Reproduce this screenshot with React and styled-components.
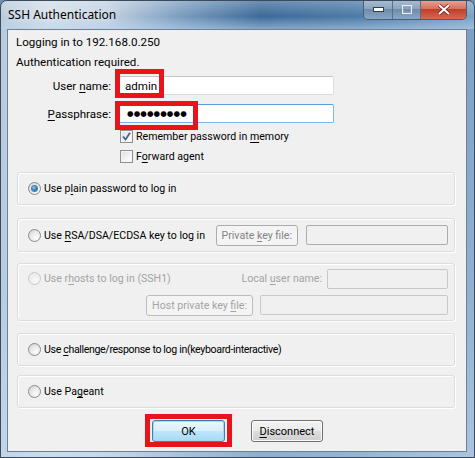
import React from "react";
import styled, { createGlobalStyle, css } from "styled-components";

const GlobalStyle = createGlobalStyle`
  body {
    margin: 0;
    background: #6f8fae;
    font-family: Roboto, "Noto Sans", sans-serif;
    font-size: 10.6px;
    color: #000;
  }
`;

const Window = styled.div`
  box-sizing: border-box;
  width: 475px;
  height: 458px;
  display: flex;
  flex-direction: column;
  border: 1px solid #3a4b5e;
  border-radius: 7px 7px 0 0;
  overflow: hidden;
  background:
    linear-gradient(90deg, #b9cadb 0%, #d3dee9 10%, #c2d2e2 22%, #7296bb 40%, #3d6a99 55%, #4c7aa8 75%, #7ea2c6 100%);
`;

const TitleBar = styled.div`
  height: 28px;
  display: flex;
  justify-content: space-between;
  align-items: flex-start;
  background: linear-gradient(180deg, rgba(255,255,255,0.25) 0%, rgba(255,255,255,0) 55%, rgba(190,215,240,0.55) 100%);
`;

const TitleText = styled.div`
  padding: 5px 0 0 7px;
  font-family: "Noto Sans", sans-serif;
  font-size: 12px;
  color: #000;
  text-shadow: 0 0 8px rgba(255, 255, 255, 0.9);
`;

const Caption = styled.div`
  display: flex;
  margin: -1px 7px 0 0;
  border: 1px solid #4a5d72;
  border-top: none;
  border-radius: 0 0 5px 5px;
  overflow: hidden;
`;

const CapBtn = styled.div`
  width: ${(p) => p.w}px;
  height: 19px;
  display: flex;
  align-items: center;
  justify-content: center;
  border-left: ${(p) => (p.first ? "none" : "1px solid #5b6f85")};
  background: linear-gradient(180deg, #a9bdd1 0%, #8ba5bf 45%, #6f8cab 50%, #88a7c5 100%);
  ${(p) =>
    p.close &&
    css`
      background: linear-gradient(180deg, #e6a797 0%, #d4735e 45%, #c0412b 50%, #d5684d 100%);
    `}
`;

const Body = styled.div`
  flex: 1;
  display: flex;
  flex-direction: column;
  padding: 0 7px 5px 6px;
  background: linear-gradient(180deg, rgba(255,255,255,0) 0%, rgba(180,205,230,0.35) 60%, rgba(200,220,240,0.6) 100%);
`;

const Client = styled.div`
  flex: 1;
  display: flex;
  flex-direction: column;
  border: 1px solid #6e8093;
  background: #f0f0f0;
`;

const InfoLine = styled.div`
  height: 20px;
  line-height: 20px;
  padding-left: 8px;
  font-size: 11.6px;
  margin-top: ${(p) => p.mt || 0}px;
`;

const FieldRow = styled.div`
  display: flex;
  align-items: center;
  margin-top: ${(p) => p.mt}px;
`;

const FieldLabel = styled.div`
  width: 103px;
  text-align: right;
  margin-right: 7px;
  font-size: 11.6px;
`;

const FieldBox = styled.div`
  position: relative;
`;

const TextInput = styled.div`
  box-sizing: border-box;
  width: 216px;
  height: 19px;
  display: flex;
  align-items: center;
  padding-left: 6px;
  font-size: 11.6px;
  background: #fff;
  border: 1px solid ${(p) => (p.focused ? "#7eb4ea" : "#dcdcdc")};
  border-top-color: ${(p) => (p.focused ? "#569de5" : "#c5c5c5")};
  border-radius: 2px;
`;

const Dots = styled.span`
  font-family: "DejaVu Sans", sans-serif;
  font-size: 7.5px;
  letter-spacing: 0.1px;
  padding-left: 2px;
`;

const Highlight = styled.div`
  position: absolute;
  box-sizing: border-box;
  border: 5px solid #e8141c;
  left: ${(p) => p.x}px;
  top: ${(p) => p.y}px;
  width: ${(p) => p.w}px;
  height: ${(p) => p.h}px;
  pointer-events: none;
`;

const CheckRow = styled.div`
  display: flex;
  align-items: center;
  gap: 3px;
  height: 20px;
  padding-left: 112px;
  margin-top: ${(p) => p.mt || 0}px;
`;

const Box = styled.div`
  box-sizing: border-box;
  width: 13px;
  height: 13px;
  border: 1px solid #8e8f8f;
  background: linear-gradient(135deg, #dcdcdc 0%, #f4f4f4 60%, #fff 100%);
  box-shadow: inset 0 0 0 1px #f4f4f4;
  display: flex;
  align-items: center;
  justify-content: center;
`;

const Group = styled.div`
  box-sizing: border-box;
  height: ${(p) => p.h}px;
  margin: ${(p) => p.mt}px 11px 0 9px;
  border: 1px solid #dcdcdc;
  border-radius: 3px;
  box-shadow: inset 1px 1px 0 #fff, 1px 1px 0 #fff;
  padding: 0 6px 0 10px;
  display: flex;
  flex-direction: column;
  justify-content: center;
  gap: 6px;
`;

const GroupRow = styled.div`
  display: flex;
  align-items: center;
  justify-content: ${(p) => (p.end ? "flex-end" : "flex-start")};
`;

const RadioLabel = styled.label`
  display: flex;
  align-items: center;
  gap: 3px;
  color: ${(p) => (p.disabled ? "#a3a3a3" : "#000")};
  letter-spacing: ${(p) => (p.tight ? "-0.35px" : "normal")};
  white-space: nowrap;
`;

const Circle = styled.div`
  box-sizing: border-box;
  width: 13px;
  height: 13px;
  border-radius: 50%;
  border: 1px solid ${(p) => (p.disabled ? "#c9c9c9" : "#8b8b8b")};
  background: ${(p) =>
    p.disabled
      ? "radial-gradient(circle at 60% 65%, #fafafa 0%, #e8e8e8 80%)"
      : "radial-gradient(circle at 65% 70%, #fdfdfd 0%, #e6e6e6 55%, #cfcfcf 100%)"};
  display: flex;
  align-items: center;
  justify-content: center;
`;

const Dot = styled.div`
  width: 5px;
  height: 5px;
  border-radius: 50%;
  background: radial-gradient(circle at 40% 35%, #8ad3ff 0%, #1c6fb4 60%, #124f85 100%);
  box-shadow: 0 0 0 1px #4d7fa5;
`;

const Spacer = styled.div`
  flex: 1;
`;

const SideButton = styled.div`
  box-sizing: border-box;
  height: ${(p) => p.h || 21}px;
  padding: 0 5px;
  display: flex;
  align-items: center;
  border: 1px solid ${(p) => (p.faint ? "#bdbdbd" : "#acacac")};
  border-radius: 3px;
  background: #f4f4f4;
  color: ${(p) => (p.faint ? "#a3a3a3" : "#838383")};
  white-space: nowrap;
  margin-right: ${(p) => p.mr || 0}px;
`;

const SideLabel = styled.div`
  color: #a3a3a3;
  margin-right: 5px;
  white-space: nowrap;
`;

const EmptyField = styled.div`
  box-sizing: border-box;
  width: ${(p) => p.w}px;
  height: ${(p) => p.h || 20}px;
  border: 1px solid ${(p) => (p.faint ? "#c8c8c8" : "#adadad")};
  border-radius: 2px;
  background: #f0f0f0;
`;

const ButtonBar = styled.div`
  display: flex;
  justify-content: center;
  gap: 26px;
  margin-top: 12px;
  padding-left: 1px;
`;

const ButtonWrap = styled.div`
  position: relative;
`;

const PushButton = styled.div`
  box-sizing: border-box;
  width: ${(p) => p.w}px;
  height: 22px;
  display: flex;
  align-items: center;
  justify-content: center;
  font-size: 11px;
  border: 1px solid ${(p) => (p.primary ? "#3c7fb1" : "#707070")};
  border-radius: 3px;
  background: ${(p) =>
    p.primary
      ? "linear-gradient(180deg, #eaf6fd 0%, #d9f0fc 50%, #bee6fd 51%, #a7d9f5 100%)"
      : "linear-gradient(180deg, #f2f2f2 0%, #ebebeb 50%, #dddddd 51%, #cfcfcf 100%)"};
  box-shadow: inset 0 0 0 1px ${(p) => (p.primary ? "#a6d7f3" : "#fbfbfb")};
`;

const U = styled.span`
  text-decoration: underline;
  text-underline-offset: 2px;
`;

const Radio = ({ checked, disabled, tight, children }) => (
  <RadioLabel disabled={disabled} tight={tight}>
    <Circle disabled={disabled}>{checked && <Dot />}</Circle>
    <span>{children}</span>
  </RadioLabel>
);

const Check = ({ checked, children, mt }) => (
  <CheckRow mt={mt}>
    <Box>
      {checked && (
        <svg width="9" height="9" viewBox="0 0 9 9">
          <path d="M1 4.5 L3.5 7.5 L8 0.8" fill="none" stroke="#4a5f97" strokeWidth="1.8" />
        </svg>
      )}
    </Box>
    <span>{children}</span>
  </CheckRow>
);

const App = () => {
  return (
    <>
      <GlobalStyle />
      <Window>
        <TitleBar>
          <TitleText>SSH Authentication</TitleText>
          <Caption>
            <CapBtn w={28} first>
              <svg width="11" height="5" viewBox="0 0 11 5">
                <rect x="0.5" y="0.5" width="10" height="4" fill="#fff" stroke="#2c3e52" />
              </svg>
            </CapBtn>
            <CapBtn w={27}>
              <svg width="10" height="9" viewBox="0 0 10 9">
                <rect x="0.5" y="0.5" width="9" height="8" fill="none" stroke="#e8eef4" />
                <rect x="1.5" y="2.5" width="7" height="5" fill="none" stroke="#8aa0b6" />
              </svg>
            </CapBtn>
            <CapBtn w={45} close>
              <svg width="14" height="11" viewBox="0 0 14 11">
                <path d="M2 1 L12 10 M12 1 L2 10" stroke="#6a2018" strokeWidth="3.6" />
                <path d="M2 1 L12 10 M12 1 L2 10" stroke="#fff" strokeWidth="2" />
              </svg>
            </CapBtn>
          </Caption>
        </TitleBar>
        <Body>
          <Client>
            <InfoLine mt={2}>Logging in to 192.168.0.250</InfoLine>
            <InfoLine>Authentication required.</InfoLine>
            <FieldRow mt={4}>
              <FieldLabel>
                User <U>n</U>ame:
              </FieldLabel>
              <FieldBox>
                <TextInput>admin</TextInput>
                <Highlight x={-3} y={-7} w={49} h={29} />
              </FieldBox>
            </FieldRow>
            <FieldRow mt={9}>
              <FieldLabel>
                <U>P</U>assphrase:
              </FieldLabel>
              <FieldBox>
                <TextInput focused>
                  <Dots>●●●●●●●●●</Dots>
                </TextInput>
                <Highlight x={-3} y={-3} w={83} h={29} />
              </FieldBox>
            </FieldRow>
            <Check checked mt={3}>
              Remember password in <U>m</U>emory
            </Check>
            <Check>
              F<U>o</U>rward agent
            </Check>

            <Group h={33} mt={6}>
              <GroupRow>
                <Radio checked>
                  Use p<U>l</U>ain password to log in
                </Radio>
              </GroupRow>
            </Group>

            <Group h={34} mt={13}>
              <GroupRow>
                <Radio>
                  Use <U>R</U>SA/DSA/ECDSA key to log in
                </Radio>
                <Spacer />
                <SideButton mr={8}>
                  <span>
                    Private <U>k</U>ey file:
                  </span>
                </SideButton>
                <EmptyField w={142} />
              </GroupRow>
            </Group>

            <Group h={58} mt={11}>
              <GroupRow>
                <Radio disabled>
                  Use r<U>h</U>osts to log in (SSH1)
                </Radio>
                <Spacer />
                <SideLabel>
                  Local <U>u</U>ser name:
                </SideLabel>
                <EmptyField w={121} faint />
              </GroupRow>
              <GroupRow end>
                <SideButton faint mr={7}>
                  <span>
                    Host private key <U>f</U>ile:
                  </span>
                </SideButton>
                <EmptyField w={188} faint />
              </GroupRow>
            </Group>

            <Group h={33} mt={12}>
              <GroupRow>
                <Radio tight>
                  Use <U>c</U>hallenge/response to log in(keyboard-interactive)
                </Radio>
              </GroupRow>
            </Group>

            <Group h={33} mt={9}>
              <GroupRow>
                <Radio>
                  Use Pa<U>g</U>eant
                </Radio>
              </GroupRow>
            </Group>

            <ButtonBar>
              <ButtonWrap>
                <PushButton primary w={73}>
                  OK
                </PushButton>
                <Highlight x={-7} y={-6} w={87} h={33} />
              </ButtonWrap>
              <PushButton w={72}>
                <span>
                  <U>D</U>isconnect
                </span>
              </PushButton>
            </ButtonBar>
          </Client>
        </Body>
      </Window>
    </>
  );
};

export default App;
